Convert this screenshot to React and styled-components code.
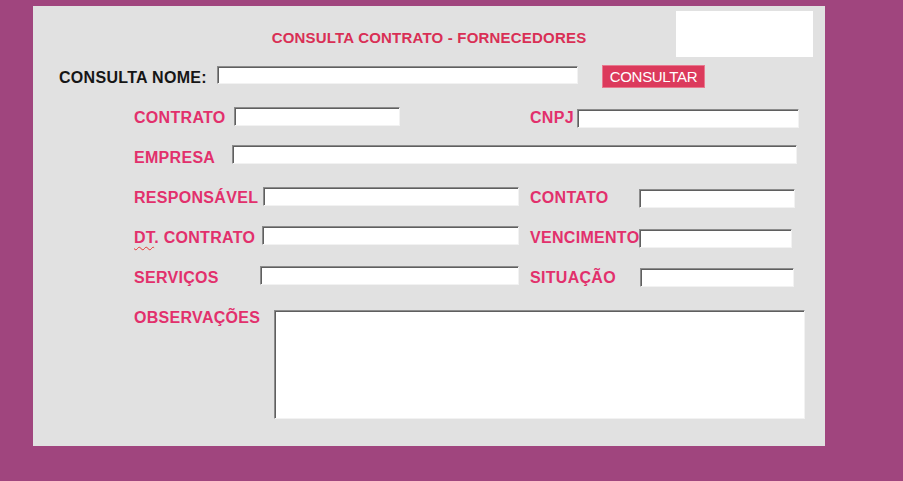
import React from 'react';
import styled, { createGlobalStyle } from 'styled-components';

const GlobalStyle = createGlobalStyle`
  html, body {
    margin: 0;
    padding: 0;
    background: #a0457e;
  }
  body {
    font-family: "Liberation Sans", Arial, sans-serif;
  }
`;

const Page = styled.div`
  min-height: 481px;
  padding: 6px 0 0 33px;
  box-sizing: border-box;
`;

const Panel = styled.div`
  width: 792px;
  height: 440px;
  background: #e1e1e1;
  box-sizing: border-box;
  padding: 5px 12px 0 0;
`;

const Header = styled.div`
  display: grid;
  grid-template-columns: 1fr auto 1fr;
  height: 46px;
  margin-right: -12px;
`;

const Title = styled.h1`
  grid-column: 2;
  margin: 6px 0 0 0;
  align-self: center;
  font-size: 15px;
  font-weight: bold;
  color: #d92f55;
  letter-spacing: 0.2px;
  white-space: nowrap;
`;

const LogoBox = styled.div`
  grid-column: 3;
  justify-self: end;
  margin-right: 12px;
  width: 137px;
  height: 46px;
  background: #ffffff;
`;

const SearchRow = styled.div`
  display: flex;
  align-items: center;
  height: 40px;
  padding-left: 26px;
`;

const SearchLabel = styled.label`
  font-size: 16px;
  font-weight: bold;
  color: #161616;
  letter-spacing: 0.3px;
  width: 158px;
  flex: none;
  margin-top: 1px;
`;

const Field = styled.input`
  box-sizing: border-box;
  width: ${(p) => p.$w}px;
  height: ${(p) => p.$h || 19}px;
  margin-top: ${(p) => p.$dy || 0}px;
  flex: none;
  background: #ffffff;
  border: 1px solid;
  border-color: #8c8c8c #f2f2f2 #f2f2f2 #8c8c8c;
  box-shadow: inset 1px 1px 0 #5f5f5f;
  padding: 0 3px;
  font: 13px "Liberation Sans", Arial, sans-serif;
  outline: none;
`;

const Area = styled.textarea`
  box-sizing: border-box;
  width: 531px;
  height: 109px;
  margin-top: 13px;
  flex: none;
  resize: none;
  background: #ffffff;
  border: 1px solid;
  border-color: #8c8c8c #f2f2f2 #f2f2f2 #8c8c8c;
  box-shadow: inset 1px 1px 0 #5f5f5f;
  outline: none;
`;

const Button = styled.button`
  margin-left: 24px;
  width: 103px;
  height: 23px;
  flex: none;
  background: #dc3a5c;
  border: 1px solid #e8798f;
  color: #ffffff;
  font: 15px "Liberation Sans", Arial, sans-serif;
  letter-spacing: -0.3px;
  padding: 0;
  margin-top: -1px;
`;

const Form = styled.div`
  padding-left: 101px;
`;

const Row = styled.div`
  display: grid;
  grid-template-columns: 396px 1fr;
  height: 40px;
  align-items: center;
`;

const Cell = styled.div`
  display: flex;
  align-items: center;
`;

const Label = styled.span`
  width: ${(p) => p.$w}px;
  flex: none;
  margin-top: 2px;
  font-size: 16px;
  font-weight: bold;
  letter-spacing: 0.3px;
  color: #e2306c;
  white-space: nowrap;
`;

const Typo = styled.span`
  text-decoration: underline wavy #e53935;
  text-decoration-thickness: 1px;
  text-underline-offset: 3px;
`;

const ObsRow = styled.div`
  display: flex;
  align-items: flex-start;
`;

const ObsLabel = styled(Label)`
  margin-top: 12px;
`;

export default function App() {
  return (
    <>
      <GlobalStyle />
      <Page>
        <Panel>
          <Header>
            <Title>CONSULTA CONTRATO - FORNECEDORES</Title>
            <LogoBox />
          </Header>

          <SearchRow>
            <SearchLabel>CONSULTA NOME:</SearchLabel>
            <Field $w={361} $h={18} $dy={-4} />
            <Button>CONSULTAR</Button>
          </SearchRow>

          <Form>
            <Row>
              <Cell>
                <Label $w={100}>CONTRATO</Label>
                <Field $w={166} $dy={-1} />
              </Cell>
              <Cell>
                <Label $w={47}>CNPJ</Label>
                <Field $w={222} $dy={3} />
              </Cell>
            </Row>
            <Row>
              <Cell>
                <Label $w={98}>EMPRESA</Label>
                <Field $w={565} $dy={-6} />
              </Cell>
            </Row>
            <Row>
              <Cell>
                <Label $w={129}>RESPONSÁVEL</Label>
                <Field $w={256} $dy={-1} />
              </Cell>
              <Cell>
                <Label $w={109}>CONTATO</Label>
                <Field $w={156} $dy={3} />
              </Cell>
            </Row>
            <Row>
              <Cell>
                <Label $w={128}>
                  <Typo>DT</Typo>. CONTRATO
                </Label>
                <Field $w={257} $dy={-3} />
              </Cell>
              <Cell>
                <Label $w={109}>VENCIMENTO</Label>
                <Field $w={153} $dy={3} />
              </Cell>
            </Row>
            <Row>
              <Cell>
                <Label $w={126}>SERVIÇOS</Label>
                <Field $w={259} $dy={-3} />
              </Cell>
              <Cell>
                <Label $w={110}>SITUAÇÃO</Label>
                <Field $w={154} $dy={1} />
              </Cell>
            </Row>
            <ObsRow>
              <ObsLabel $w={140}>OBSERVAÇÕES</ObsLabel>
              <Area />
            </ObsRow>
          </Form>
        </Panel>
      </Page>
    </>
  );
}
